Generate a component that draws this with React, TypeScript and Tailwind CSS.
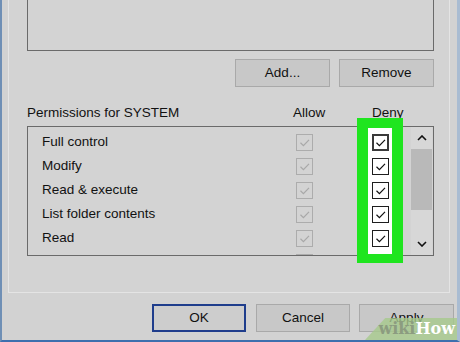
import React from "react";

const PERMISSIONS = [
  "Full control",
  "Modify",
  "Read & execute",
  "List folder contents",
  "Read",
];

const CheckBox = ({ muted, focused }: { muted?: boolean; focused?: boolean }) => (
  <div
    className={
      "w-[17px] h-[17px] box-border flex items-center justify-center " +
      (muted
        ? "border border-[#acacac]"
        : focused
        ? "border-2 border-[#3a3a3a] bg-white"
        : "border border-[#1e1e1e] bg-white")
    }
  >
    <svg viewBox="0 0 17 17" className="w-[17px] h-[17px] shrink-0">
      <path
        d="M4.5 8.8 L7.4 11.6 L13 5.8"
        fill="none"
        stroke={muted ? "#a8a8a8" : "#111"}
        strokeWidth="1.2"
      />
    </svg>
  </div>
);

const Chevron = ({ down }: { down?: boolean }) => (
  <svg viewBox="0 0 10 6" className="w-[10px] h-[6px]">
    <path
      d={down ? "M1 1 L5 5 L9 1" : "M1 5 L5 1 L9 5"}
      fill="none"
      stroke="#111"
      strokeWidth="1.6"
    />
  </svg>
);

const BTN =
  "h-[28px] box-border flex items-center justify-center bg-[#c8c8c8] border border-[#a9a9a9]";

export default function App() {
  return (
    <div className="relative w-[460px] h-[342px] overflow-hidden bg-[#d2d2d2] border-l-2 border-r-[3px] border-b-2 border-l-[#6f8fb5] border-r-[#a9bcd2] border-b-[#3d6fae] font-['Liberation_Sans',Arial,sans-serif] text-[13.5px] text-[#111]">
      {/* tab page */}
      <div className="ml-[6px] w-[442px] h-[293px] box-border border-x border-b border-[#e4e4e4] bg-[#d3d3d3] pl-[18px]">
        <div className="w-[407px] h-[51px] box-border border-x border-b border-[#6a6a6a]" />

        <div className="w-[407px] mt-[8px] flex justify-end gap-[9px]">
          <div className={BTN + " w-[95px]"}>Add...</div>
          <div className={BTN + " w-[95px]"}>Remove</div>
        </div>

        <div className="w-[407px] mt-[18px] h-[16px] flex items-center leading-[16px]">
          <span className="w-[266px]">Permissions for SYSTEM</span>
          <span className="w-[79px]">Allow</span>
          <span>Deny</span>
        </div>

        <div className="mt-[5px] w-[407px] h-[130px] box-border border border-[#6a6a6a] flex overflow-hidden">
          <div className="w-[264px] pt-[3px] pl-[14px]">
            {PERMISSIONS.map((p) => (
              <div key={p} className="h-[24px] flex items-center">
                {p}
              </div>
            ))}
          </div>
          <div className="w-[24px] pt-[3px] flex flex-col items-center">
            {[...PERMISSIONS, "x"].map((p) => (
              <div key={p} className="h-[24px] flex items-center shrink-0">
                <CheckBox muted />
              </div>
            ))}
          </div>
          <div className="w-[52px]" />
          <div className="w-[24px] bg-white pt-[3px] flex flex-col items-center">
            {[...PERMISSIONS, "x"].map((p, i) => (
              <div key={p} className="h-[24px] flex items-center shrink-0">
                <CheckBox focused={i === 0} />
              </div>
            ))}
          </div>
          <div className="w-[19px]" />
          <div className="w-[21px] flex flex-col bg-[#d7d7d7]">
            <div className="h-[22px] flex items-center justify-center">
              <Chevron />
            </div>
            <div className="h-[61px] bg-[#b9b9b9]" />
            <div className="flex-1" />
            <div className="h-[22px] flex items-center justify-center">
              <Chevron down />
            </div>
          </div>
        </div>
      </div>

      <div className="mt-[11px] ml-[150px] flex">
        <div className="w-[94px] h-[28px] box-border flex items-center justify-center bg-[#cdcdcd] border-2 border-[#1f3d8c]">
          OK
        </div>
        <div className={BTN + " w-[94px] ml-[10px]"}>Cancel</div>
        <div className={BTN + " w-[95px] ml-[9px]"}>Apply</div>
      </div>

      {/* highlight */}
      <div className="absolute left-[355px] top-[118px] w-[46px] h-[145px] box-border border-x-[11px] border-t-[10px] border-b-[9px] border-[#1fe51f]" />

      {/* watermark */}
      <div className="absolute right-0 bottom-0 w-[92px] h-[22px] bg-[#a6c98c]/80 [clip-path:polygon(22%_0,100%_0,100%_100%,0_100%)] flex items-center justify-end pr-[2px] font-['DejaVu_Serif',serif] font-bold text-[16px] leading-none">
        <span className="text-[#8c9c80]">wiki</span>
        <span className="text-white">How</span>
      </div>
    </div>
  );
}
